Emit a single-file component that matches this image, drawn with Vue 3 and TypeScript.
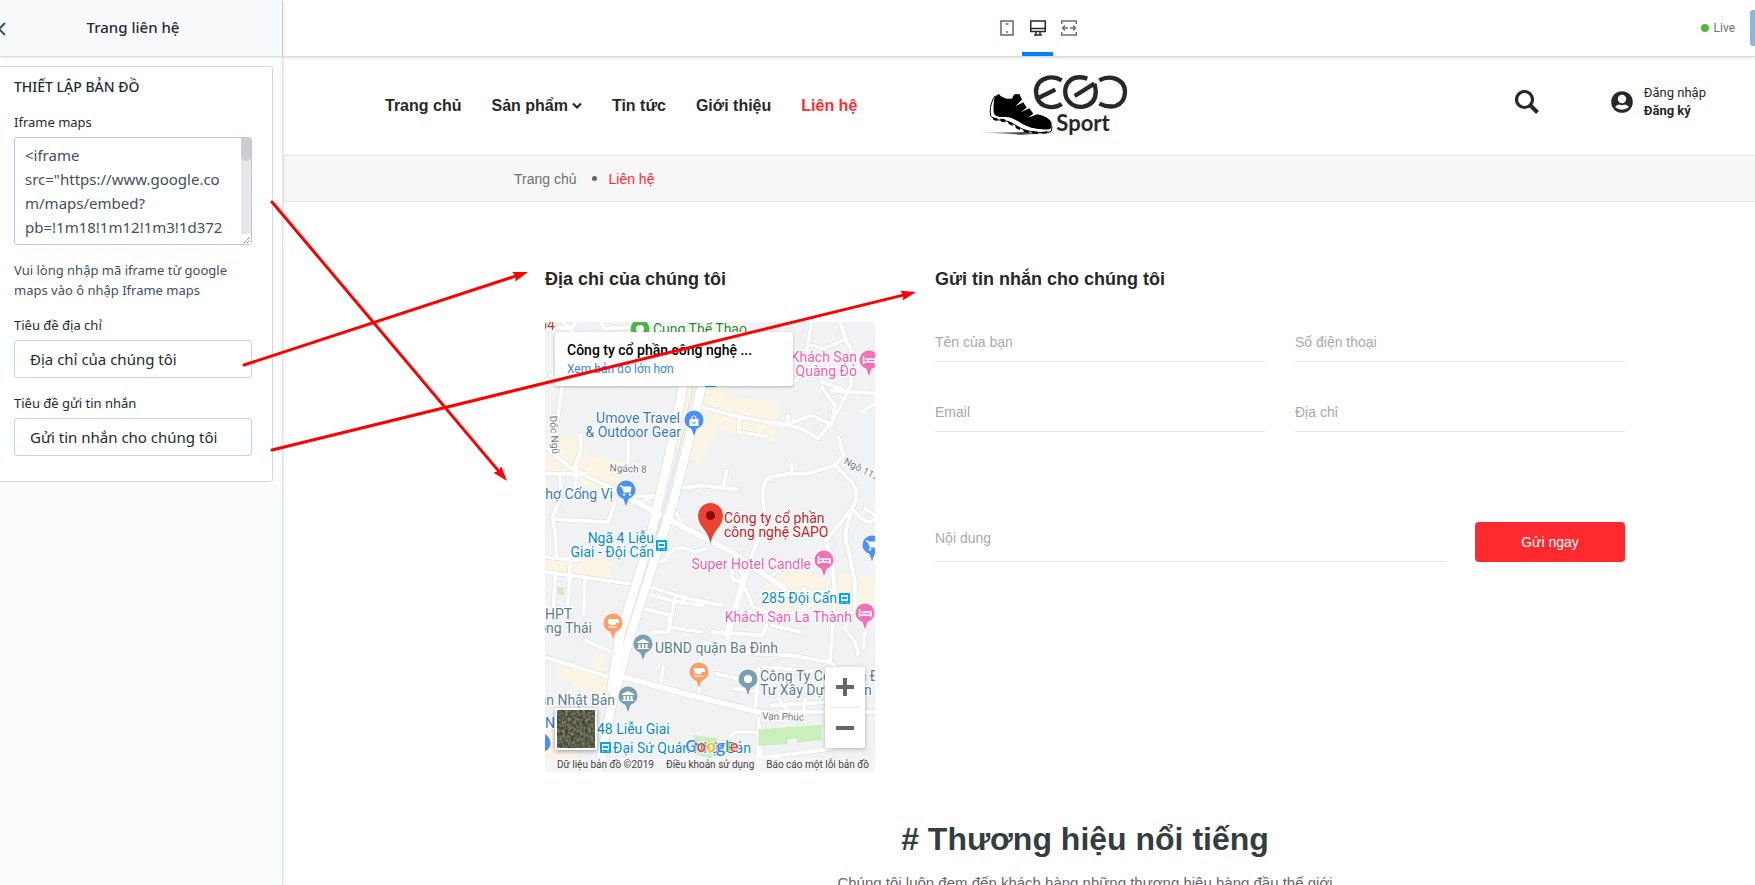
<script setup lang="ts">
interface PinItem { x: number; y: number; fill: string; kind: 'bag' | 'cart' | 'bed' | 'cup' | 'bank' | 'dot' | 'tree' }
interface LabelItem { x: number; y: number; text: string; tone: string; anchor?: 'start' | 'middle' | 'end'; small?: boolean; rotate?: number }
interface Arrow { x: number; y: number; tx: number; ty: number }

const navItems = [
  { text: 'Trang chủ' },
  { text: 'Sản phẩm', more: true },
  { text: 'Tin tức' },
  { text: 'Giới thiệu' },
  { text: 'Liên hệ', active: true },
]

const iframeCode = '<iframe\nsrc="https://www.google.co\nm/maps/embed?\npb=!1m18!1m12!1m3!1d372'

const minorRoads = [
  'M0 10 L70 20 M55 0 L95 40 M165 0 L180 20 L260 15 M90 0 L60 70 M18 160 L52 190 L36 300',
  'M800 0 L785 90 Q770 190 720 190 M885 0 L905 60 Q930 90 920 140 L918 190 L860 300 L820 350 L770 320 L690 300',
  'M905 50 L835 80 L800 70 M890 200 L830 180 M860 205 L990 215 M830 195 L870 250 L860 310',
  'M470 255 L585 285 L720 310 L800 280 L865 310 M730 280 L725 310 M950 270 L990 245',
  'M585 290 L580 330 L665 343',
  'M0 375 L80 440 L200 500 M105 340 L110 380 L90 430 L95 470 M250 340 L250 420 M0 455 L120 455 M95 440 L90 500',
  'M45 455 L50 520 L20 590 L80 595 L190 600 L210 540 M22 590 L30 630 L35 700 M0 705 L100 715 M78 700 L72 780 M0 750 L110 765 L290 790 M30 760 L25 870 M75 765 L65 880 M120 770 L115 880',
  'M250 525 L340 520 M280 545 L340 515 M400 500 L470 490 L575 502 M535 495 L545 448 M380 550 L420 620 M340 720 L360 715 L375 690 Q400 665 450 690 L480 680',
  'M870 430 L785 455 L735 455 L675 465 Q645 490 655 540 L660 580 L645 640 L600 750 L540 940 M740 425 L740 455',
  'M880 345 L895 400 L870 430 L920 480 Q950 520 920 560 L950 590 Q975 610 990 590 M920 560 L840 660 L860 700 L870 820 M920 570 Q890 640 910 680 L930 780 L930 860 M960 560 L990 580',
  'M570 700 L560 760 Q570 790 600 770 L585 745 M840 720 Q750 700 670 770 M720 800 L760 825 L780 800 M870 800 L780 860 L680 890',
  'M270 780 L410 825 L530 850 M420 820 L410 845 M300 860 L375 880 L370 915 L470 930 M305 815 L375 835 L475 850 M390 830 L370 930 L320 930 M610 740 L540 980',
  'M500 930 L650 940 L665 910 M680 910 L765 930 M600 800 L625 855 L660 870 M475 960 L630 995 L740 1000 L850 1020',
  'M120 955 L200 990 M0 1005 L210 1070 M355 1035 L345 1090 M470 990 L460 1130 M515 1055 L620 1080 M570 1100 L640 1110 M640 1040 L630 1180 M655 1035 L850 1050 M700 1130 L740 1180 M780 1130 L775 1190 M680 1150 L860 1140',
  'M645 1170 L990 1170 M540 1260 L570 1230 L640 1230 L640 1350 M640 1310 L860 1280 M640 1190 L650 1320',
  'M870 820 L855 1020 L900 1060 M920 870 L900 920 L930 960 L940 1000 M960 930 L955 980',
]

const pins: PinItem[] = [
  { x: 95, y: 24, fill: '#4bb543', kind: 'tree' },
  { x: 324, y: 55, fill: '#f072b6', kind: 'bed' },
  { x: 149, y: 115, fill: '#4a90f5', kind: 'bag' },
  { x: 81, y: 185, fill: '#4a90f5', kind: 'cart' },
  { x: 279, y: 255, fill: '#f072b6', kind: 'bed' },
  { x: 327, y: 240, fill: '#4a90f5', kind: 'cart' },
  { x: 68, y: 318, fill: '#ff9e67', kind: 'cup' },
  { x: 98, y: 339, fill: '#7b9eb0', kind: 'bank' },
  { x: 320, y: 308, fill: '#f072b6', kind: 'bed' },
  { x: 154, y: 367, fill: '#ff9e67', kind: 'cup' },
  { x: 203, y: 374, fill: '#7b9eb0', kind: 'dot' },
  { x: 83, y: 391, fill: '#7b9eb0', kind: 'bank' },
  { x: -4, y: 438, fill: '#4a90f5', kind: 'dot' },
]

const labels: LabelItem[] = [
  { x: 10, y: 8, text: '04', tone: 'brick', anchor: 'end' },
  { x: 108, y: 12, text: 'Cung Thể Thao', tone: 'green' },
  { x: 312, y: 40, text: 'Khách Sạn', tone: 'pink', anchor: 'end' },
  { x: 312, y: 54, text: 'Quàng Đỏ', tone: 'pink', anchor: 'end' },
  { x: 135, y: 101, text: 'Umove Travel', tone: 'navy', anchor: 'end' },
  { x: 136, y: 115, text: '& Outdoor Gear', tone: 'navy', anchor: 'end' },
  { x: 6, y: 113, text: 'Dốc Ngũ', tone: 'gray', anchor: 'middle', small: true, rotate: 86 },
  { x: 83, y: 150, text: 'Ngách 8', tone: 'gray', anchor: 'middle', small: true, rotate: 2 },
  { x: 315, y: 150, text: 'Ngõ 117', tone: 'gray', anchor: 'middle', small: true, rotate: 27 },
  { x: 68, y: 177, text: 'Chợ Cống Vị', tone: 'navy', anchor: 'end' },
  { x: 179, y: 201, text: 'Công ty cổ phần', tone: 'red' },
  { x: 179, y: 215, text: 'công nghệ SAPO', tone: 'red' },
  { x: 109, y: 221, text: 'Ngã 4 Liễu', tone: 'sky', anchor: 'end' },
  { x: 109, y: 235, text: 'Giai - Đội Cấn', tone: 'sky', anchor: 'end' },
  { x: 266, y: 247, text: 'Super Hotel Candle', tone: 'pink', anchor: 'end' },
  { x: 292, y: 281, text: '285 Đội Cấn', tone: 'sky', anchor: 'end' },
  { x: 307, y: 300, text: 'Khách Sạn La Thành', tone: 'pink', anchor: 'end' },
  { x: 0, y: 297, text: 'HPT', tone: 'slate' },
  { x: 47, y: 311, text: 'Đông Thái', tone: 'slate', anchor: 'end' },
  { x: 110, y: 331, text: 'UBND quận Ba Đình', tone: 'slate' },
  { x: 215, y: 359, text: 'Công Ty Cổ Phần Đ', tone: 'slate' },
  { x: 215, y: 373, text: 'Tư Xây Dựng Niên', tone: 'slate' },
  { x: 70, y: 383, text: 'quán Nhật Bản', tone: 'slate', anchor: 'end' },
  { x: 0, y: 406, text: 'Nội', tone: 'navy' },
  { x: 238, y: 398, text: 'Vạn Phúc', tone: 'gray', anchor: 'middle', small: true, rotate: 2 },
  { x: 52, y: 412, text: '48 Liễu Giai', tone: 'sky' },
  { x: 68, y: 431, text: 'Đại Sứ Quán Nhật Bản', tone: 'sky' },
]

const stops = [[111, 218], [294, 271], [55, 420], [160, 54]]

const googleLetters = [
  { c: 'G', f: '#4285f4' }, { c: 'o', f: '#ea4335' }, { c: 'o', f: '#fbbc05' },
  { c: 'g', f: '#4285f4' }, { c: 'l', f: '#34a853' }, { c: 'e', f: '#ea4335' },
]

const arrows: Arrow[] = [
  { x: 507, y: 481, tx: 272, ty: 202 },
  { x: 528, y: 272, tx: 244, ty: 365 },
  { x: 916, y: 292, tx: 272, ty: 450 },
]
function arrowFrame(a: Arrow): string {
  const deg = Math.atan2(a.y - a.ty, a.x - a.tx) * 180 / Math.PI
  return `translate(${a.x} ${a.y}) rotate(${deg})`
}
function arrowLength(a: Arrow): number {
  return Math.hypot(a.x - a.tx, a.y - a.ty)
}
</script>

<template>
  <div class="editor">
    <aside class="sidebar">
      <header class="side-head">
        <button class="back" type="button" aria-label="Quay lại">
          <svg width="8" height="14" viewBox="0 0 8 14"><path d="M7 1 L1 7 L7 13" fill="none" stroke="#43535f" stroke-width="2" /></svg>
        </button>
        <h1>Trang liên hệ</h1>
      </header>
      <section class="panel">
        <h2>THIẾT LẬP BẢN ĐỒ</h2>
        <label for="iframe">Iframe maps</label>
        <div class="code-wrap">
          <textarea id="iframe" :value="iframeCode"></textarea>
          <span class="track"><span class="thumb"></span>
            <svg class="grip" width="10" height="10" viewBox="0 0 10 10"><path d="M3 9 L9 3 M6 9 L9 6" stroke="#444" stroke-dasharray="1 1" /></svg>
          </span>
        </div>
        <p>Vui lòng nhập mã iframe từ google maps vào ô nhập Iframe maps</p>
        <label for="addr-title">Tiêu đề địa chỉ</label>
        <input id="addr-title" type="text" value="Địa chỉ của chúng tôi" />
        <label for="msg-title">Tiêu đề gửi tin nhắn</label>
        <input id="msg-title" type="text" value="Gửi tin nhắn cho chúng tôi" />
      </section>
    </aside>

    <div class="main">
      <div class="toolbar">
        <div class="devices">
          <button type="button" aria-label="Di động">
            <svg width="16" height="16" viewBox="0 0 16 16" fill="none" stroke="#637381"><rect x="2" y="1" width="12" height="14" stroke-width="1.6" /><path d="M6.500 4 H9.500 M7 12 H9" stroke-width="1.500" /></svg>
          </button>
          <button type="button" class="on" aria-label="Máy tính">
            <svg width="16" height="16" viewBox="0 0 16 16" fill="none" stroke="#212b36" stroke-width="1.500"><rect x="0.750" y="1" width="14.500" height="10.500" /><path d="M1 8.500 H15 M6 12 V14.500 M10 12 V14.500 M4 15 H12" /></svg>
          </button>
          <button type="button" aria-label="Toàn màn hình">
            <svg width="16" height="16" viewBox="0 0 16 16" fill="none" stroke="#637381" stroke-width="1.500"><path d="M0.750 4 V1 H15.250 V4 M0.750 12 V15 H15.250 V12 M1.500 8 H7 M9 8 H14.500 M4 5.500 L1.500 8 L4 10.500 M12 5.500 L14.500 8 L12 10.500" /></svg>
          </button>
        </div>
        <div class="status"><span class="live-dot"></span>Live</div>
        <button class="save" type="button" aria-label="Lưu"></button>
      </div>

      <div class="site">
        <header class="site-head">
          <nav>
            <a v-for="n in navItems" :key="n.text" href="#" :class="{ active: n.active }">{{ n.text }}<svg v-if="n.more" width="10" height="8" viewBox="0 0 10 8"><path d="M1 1.500 L5 5.500 L9 1.500" fill="none" stroke="#282828" stroke-width="2.200" /></svg></a>
          </nav>
          <a class="logo" href="#" aria-label="EGO Sport">
            <svg width="148" height="62" viewBox="0 0 444 186">
              <defs><linearGradient id="shade"><stop offset="0" stop-color="#999" stop-opacity="0.300" /><stop offset="0.500" stop-color="#333" /><stop offset="1" stop-color="#999" stop-opacity="0" /></linearGradient></defs>
              <path d="M0 172 L230 171 L250 174 L120 179 Z" fill="url(#shade)" />
              <path d="M46 62 C34 78 28 100 32 122 C40 134 60 136 80 138 C104 146 122 164 146 168 C170 172 204 176 214 168 L216 154" fill="#fff" stroke="#000" stroke-width="3" />
              <path d="M44 66 L56 56 Q60 64 72 68 Q88 74 97 70 Q98 60 108 56 Q114 60 118 56 L126 74 L106 94 L130 82 L140 98 L122 112 L148 100 L160 116 L144 128 L172 118 Q204 124 214 142 Q218 158 208 163 Q176 164 154 158 C120 150 106 124 72 126 Q46 126 42 116 Q38 92 44 66 Z" />
              <path d="M38 127 l14 3 v8 l-12 -3 z M60 131 l14 1 l3 10 l-13 -2 z M84 138 l14 6 v9 l-12 -6 z M106 150 l14 8 v8 l-13 -7 z M130 163 l16 5 v7 l-15 -4 z M156 169 l18 2 v6 l-17 -1 z M184 171 l18 -2 v6 l-16 1 z" />
              <g fill="none" stroke="#282828" stroke-width="13">
                <path d="M245 16 Q226 4 205 8 Q168 16 168 51 Q170 84 196 93 Q224 102 245 87 M169 72 L226 44" />
                <path d="M322 11 Q290 1 272 15 Q248 35 259 68 Q275 99 310 95 Q346 88 347 53 Q348 42 343 26 M343 26 L284 63" />
                <path d="M358 16 Q380 4 403 10 Q435 20 435 51 Q434 84 406 93 Q382 98 358 86" />
              </g>
              <text x="229" y="169" font-size="66" font-weight="bold" fill="#282828">Sport</text>
            </svg>
          </a>
          <button class="search" type="button" aria-label="Tìm kiếm">
            <svg width="24" height="24" viewBox="0 0 24 24" fill="none" stroke="#282828"><circle cx="9.500" cy="9.500" r="8" stroke-width="3.200" /><path d="M15.500 15.500 L22.500 22.500" stroke-width="4" /></svg>
          </button>
          <div class="account">
            <svg width="22" height="22" viewBox="0 0 22 22"><circle cx="11" cy="11" r="10.800" fill="#282828" /><circle cx="11" cy="8" r="4.200" fill="#fff" /><path d="M4 16 Q6 13.500 8 13.500 Q11 15 14 13.500 Q16 13.500 18 16 Q11 21.500 4 16 Z" fill="#fff" /></svg>
            <div><a href="#">Đăng nhập</a><a href="#" class="strong">Đăng ký</a></div>
          </div>
        </header>

        <div class="crumb-bar">
          <div class="crumbs"><a href="#">Trang chủ</a><i></i><span>Liên hệ</span></div>
        </div>

        <div class="contact">
          <section class="where">
            <h3>Địa chỉ của chúng tôi</h3>
            <div class="map">
              <svg class="canvas" viewBox="0 0 330 450" preserveAspectRatio="xMidYMid slice">
                <rect width="330" height="450" fill="#f1f2f4" />
                <svg width="330" height="450" viewBox="0 0 990 1350">
                  <g fill="#f9f4e3">
                    <path d="M450 0 H590 L575 130 L540 220 L700 245 L695 360 L585 345 L520 320 L465 430 L380 380 L430 200 Z" />
                    <path d="M0 340 H100 L130 400 L240 420 L200 550 L90 470 L0 450 Z M0 690 L200 720 V770 L0 760 Z" />
                    <path d="M650 800 L740 730 L840 770 L900 750 L990 770 V850 H780 L700 880 Z M50 1020 L230 1080 L210 1150 L30 1060 Z M0 1200 L110 1220 L90 1330 L0 1310 Z M150 990 L190 1000 L170 1060 L140 1050 Z" />
                  </g>
                  <g fill="none" stroke-linejoin="round" stroke-linecap="round">
                    <g stroke="#e1e4e8" stroke-width="15"><path v-for="r in minorRoads" :key="r" :d="r" /></g>
                    <g stroke="#fff" stroke-width="11"><path v-for="r in minorRoads" :key="r" :d="r" /></g>
                    <g stroke="#dfe2e6"><path d="M470 190 L440 320 L385 540 L310 770 L250 960 L200 1150 L160 1350 M415 190 L375 390 L310 670 L225 940 L200 1100" stroke-width="31" /><path d="M180 490 L330 570 L560 690 L720 800 M215 1060 L420 1115 L640 1170 L740 1185" stroke-width="21" /></g>
                    <g stroke="#fff"><path d="M470 190 L440 320 L385 540 L310 770 L250 960 L200 1150 L160 1350 M415 190 L375 390 L310 670 L225 940 L200 1100" stroke-width="26" /><path d="M180 490 L330 570 L560 690 L720 800 M215 1060 L420 1115 L640 1170 L740 1185" stroke-width="17" /></g>
                    <path d="M443 200 L408 360 L350 590 L285 800" stroke="#e4e6ea" stroke-width="5" />
                  </g>
                  <g fill="#c9efbb"><path d="M640 1222 L830 1208 V1255 L755 1262 V1250 L728 1252 V1266 L640 1272 Z M450 1240 L520 1250 L500 1310 L430 1290 Z M38 796 h18 v22 h-18 z" /></g>
                </svg>
                <g v-for="(s, i) in stops" :key="i" :transform="`translate(${s[0]} ${s[1]})`">
                  <rect width="11" height="11" rx="1" fill="#00a8f0" /><rect x="2" y="2" width="7" height="6" fill="#fff" /><rect x="3" y="4" width="5" height="2" fill="#00a8f0" />
                  <path d="M3 9 V10 M8 9 V10" stroke="#fff" />
                </g>
                <g v-for="(p, i) in pins" :key="`p${i}`" :transform="`translate(${p.x} ${p.y})`">
                  <path d="M0 -1 L-2.500 -8 Q-9.500 -11 -9.500 -17 A9.500 9.500 0 0 1 9.500 -17 Q9.500 -11 2.500 -8 Z" :fill="p.fill" />
                  <g v-if="p.kind === 'bed'" fill="none" stroke="#fff" stroke-width="1.500"><path d="M-5.500 -21 V-13 M-5.500 -15 H6 V-13 M6 -15 V-18 H-1 V-16" /><circle cx="-3" cy="-18" r="1" fill="#fff" stroke="none" /></g>
                  <g v-else-if="p.kind === 'cart'"><path d="M-6 -21 H-4 L-2 -15 H4 L5 -20 H-4 Z" fill="#fff" stroke="#fff" /><circle cx="-2" cy="-12.500" r="1.200" fill="#fff" /><circle cx="4" cy="-12.500" r="1.200" fill="#fff" /></g>
                  <g v-else-if="p.kind === 'bag'"><path d="M-4.500 -18 H4.500 V-11 H-4.500 Z" fill="#fff" /><path d="M-2 -18 V-20 Q0 -23 2 -20 V-18" fill="none" stroke="#fff" /><path d="M-2 -15 Q0 -12 2 -15" fill="none" stroke="#4a90f5" /></g>
                  <g v-else-if="p.kind === 'cup'" fill="#fff"><path d="M-5 -21 H5 V-20 H6 V-17 H3 L2 -15 H-3 L-5 -17 Z M-5 -13.500 H4 V-12.500 H-5 Z" /></g>
                  <g v-else-if="p.kind === 'bank'" fill="#fff"><path d="M-6 -19 L0 -22 L6 -19 V-18 H-6 Z M-4.500 -17 h2 v4 h-2 z M-1 -17 h2 v4 h-2 z M2.500 -17 h2 v4 h-2 z M-6 -13 H6 V-12 H-6 Z" /></g>
                  <circle v-else cx="0" cy="-17" r="4" fill="#fff" />
                </g>
                <path d="M165.500 222 Q164 213 158 206 Q153 200 153 193.500 A12.500 12.500 0 0 1 178 193.500 Q178 200 173 206 Q167 213 165.500 222 Z" fill="#ea4335" />
                <circle cx="165.500" cy="193.500" r="4.500" fill="#8e0b06" />
                <text v-for="l in labels" :key="l.text" :class="['lbl', l.tone, { small: l.small }]" :text-anchor="l.anchor ?? 'start'" :transform="`translate(${l.x} ${l.y}) rotate(${l.rotate ?? 0})`">{{ l.text }}</text>
                <text x="140" y="430" class="google"><tspan v-for="(g, i) in googleLetters" :key="i" :fill="g.f">{{ g.c }}</tspan></text>
              </svg>
              <div class="place"><strong>Công ty cổ phần công nghệ ...</strong><a href="#">Xem bản đồ lớn hơn</a></div>
              <button class="sat" type="button" aria-label="Vệ tinh">
                <svg viewBox="0 0 38 38"><defs><filter id="ground" color-interpolation-filters="sRGB"><feTurbulence type="fractalNoise" baseFrequency="0.350" numOctaves="3" seed="4" /><feColorMatrix values="0.500 0 0 0 0.120  0.500 0 0 0 0.120  0.450 0 0 0 0.080  0 0 0 0 1" /></filter></defs><rect width="38" height="38" filter="url(#ground)" /></svg>
              </button>
              <div class="zoomer">
                <button type="button" aria-label="Phóng to"><svg width="18" height="18" viewBox="0 0 18 18"><path d="M0 9 H18 M9 0 V18" stroke="#666" stroke-width="4" /></svg></button>
                <button type="button" aria-label="Thu nhỏ"><svg width="18" height="18" viewBox="0 0 18 18"><path d="M0 9 H18" stroke="#666" stroke-width="4" /></svg></button>
              </div>
              <div class="terms"><span>Dữ liệu bản đồ ©2019</span><a href="#">Điều khoản sử dụng</a><a href="#">Báo cáo một lỗi bản đồ</a></div>
            </div>
          </section>

          <section class="message">
            <h3>Gửi tin nhắn cho chúng tôi</h3>
            <form @submit.prevent>
              <input type="text" placeholder="Tên của bạn" aria-label="Tên của bạn" />
              <input type="tel" placeholder="Số điện thoại" aria-label="Số điện thoại" />
              <input type="email" placeholder="Email" aria-label="Email" />
              <input type="text" placeholder="Địa chỉ" aria-label="Địa chỉ" />
              <div class="send-row">
                <textarea placeholder="Nội dung" aria-label="Nội dung"></textarea>
                <button type="submit">Gửi ngay</button>
              </div>
            </form>
          </section>
        </div>

        <section class="brands">
          <h2># Thương hiệu nổi tiếng</h2>
          <p>Chúng tôi luôn đem đến khách hàng những thương hiệu hàng đầu thế giới</p>
        </section>
      </div>
    </div>

    <svg class="notes" aria-hidden="true">
      <g v-for="(a, i) in arrows" :key="i" :transform="arrowFrame(a)">
        <line :x1="-arrowLength(a)" y1="0" x2="-10" y2="0" stroke="#f00" stroke-width="3" stroke-linecap="round" />
        <path d="M0 0 L-15 -5 L-13 0 L-15 5 Z" fill="#f00" />
      </g>
    </svg>
  </div>
</template>

<style>
body { overflow: hidden; }
</style>
<style scoped>
.editor { position: relative; display: flex; height: 100vh; overflow: hidden; background: #fff; font-family: "Liberation Sans", Arial, sans-serif; color: #282828; }
.editor *, .editor *::before { box-sizing: border-box; }
button { border: 0; padding: 0; background: none; font: inherit; }
a { color: inherit; text-decoration: none; }
h1, h2, h3, p { margin: 0; }
svg { display: block; }
input, textarea { border-radius: 0; outline: 0; font: inherit; }

.sidebar { flex: 0 0 283px; background: #fbfcfc; border-right: 1px solid #dfe1e3; box-shadow: 0 0 4px #0002; font-family: "Noto Sans", "Open Sans", sans-serif; color: #212b36; z-index: 1; }
.side-head { position: relative; display: flex; align-items: center; justify-content: center; height: 57px; padding: 0 16px 2px 0; background: #f9fafb; border-bottom: 1px solid #d9dbdf; box-shadow: 0 1px 3px #0001; }
.side-head h1 { font-size: 15px; font-weight: 500; line-height: 20px; }
.back { position: absolute; left: -2px; top: 22px; }
.panel { margin: 9px 9px 0 0; padding: 10px 20px 25px 14px; background: #fff; border: 1px solid #d0d9e3; border-left: 0; border-radius: 0 3px 3px 0; }
.panel h2 { font-size: 14px; font-weight: 500; line-height: 20px; margin-bottom: 15px; }
.panel label { display: block; font-size: 13px; line-height: 20px; margin-bottom: 5px; }
.panel p { font-size: 13px; line-height: 20px; margin: 15px 0; color: #43505c; }
.panel input { display: block; width: 100%; height: 38px; padding: 0 15px; border: 1px solid #c9d3dd; border-radius: 3px; font-size: 15px; color: #212b36; }
.panel input + label { margin-top: 15px; }
.code-wrap { position: relative; }
.code-wrap textarea { display: block; width: 100%; height: 108px; padding: 5px 12px 0 10px; border: 1px solid #b9c8d6; border-radius: 3px; resize: none; overflow: hidden; font-size: 15px; line-height: 24px; color: #43505c; white-space: pre; }
.track { position: absolute; top: 1px; right: 1px; bottom: 1px; width: 10px; background: #e6e7e8; }
.thumb { display: block; height: 23px; border-radius: 0 0 5px 5px; background: #cdcdcd; }
.grip { position: absolute; bottom: 0; right: 0; background: #fff; }

.main { flex: 1; min-width: 0; display: flex; flex-direction: column; }
.toolbar { position: relative; display: flex; flex: 0 0 57px; align-items: center; justify-content: flex-end; border-bottom: 1px solid #dcdcdc; box-shadow: 0 1px 3px #0002; z-index: 1; }
.devices { display: flex; margin-right: auto; padding-left: 708px; height: 56px; }
.devices button { width: 31px; display: flex; align-items: center; justify-content: center; padding-top: 4px; border-bottom: 4px solid transparent; }
.devices .on { border-color: #007fff; }
.status { display: flex; align-items: center; gap: 5px; font: 12px Roboto, sans-serif; color: #637381; }
.live-dot { width: 8px; height: 8px; border-radius: 50%; background: #50b83c; }
.save { width: 5px; height: 36px; margin-left: 15px; border-radius: 3px 0 0 3px; background: #8cb6dc; }

.site-head { display: flex; align-items: center; height: 99px; padding: 0 49px 0 102px; border-bottom: 1px solid #e6e6e6; }
nav { display: flex; gap: 30px; padding-right: 123px; font-size: 16px; font-weight: bold; line-height: 24px; }
nav a { display: flex; align-items: center; gap: 4px; white-space: nowrap; }
nav .active, .crumbs span { color: #ff2a2f; }
.logo text { font-family: Lato, sans-serif; }
.search { margin: 0 0 8px auto; }
.account { display: flex; align-items: center; gap: 11px; margin: 0 0 8px 72px; font: 13px/18px Roboto, sans-serif; }
.account a { display: block; white-space: nowrap; }
.account .strong { font-weight: bold; }
.crumb-bar { padding-left: 130px; background: #f7f7f7; border-bottom: 1px solid #e9e9e9; }
.crumbs { display: flex; align-items: center; max-width: 1140px; margin: 0 auto; height: 45px; font-size: 14px; color: #707070; }
.crumbs i { width: 5px; height: 5px; margin: 0 12px 0 15px; border-radius: 50%; background: #666; }

.contact, .brands { margin-left: 132px; }
.contact { display: grid; grid-template-columns: 330px 690px; justify-content: center; column-gap: 60px; padding-top: 65px; }
.contact h3 { font-size: 18px; line-height: 24px; margin-bottom: 31px; }
.map { position: relative; height: 450px; overflow: hidden; border-radius: 3px; }
.canvas { width: 100%; height: 100%; }
.lbl { font: 14px Roboto, sans-serif; paint-order: stroke; stroke: #fff; stroke-width: 2px; }
.lbl.small { font-size: 10px; }
.brick { fill: #c0392b; } .green { fill: #1f8a2d; } .pink { fill: #ef5fae; } .navy { fill: #3b78c2; }
.gray { fill: #6f7780; } .red { fill: #c5221f; } .sky { fill: #058cc9; } .slate { fill: #5d7d8c; }
.google { font: 600 16px "Open Sans", sans-serif; paint-order: stroke; stroke: #fff; stroke-width: 1px; }
.place { position: absolute; left: 10px; top: 10px; width: 238px; height: 54px; padding: 9px 12px; background: #fff; border-radius: 2px; box-shadow: 0 1px 3px #0004; font: 12px/19px Roboto, sans-serif; }
.place strong { display: block; font-size: 14px; font-weight: 500; color: #000; }
.place a { display: block; color: #3a84df; }
.sat { position: absolute; left: 10px; bottom: 22px; width: 42px; height: 42px; border: 2px solid #fff; border-radius: 2px; box-shadow: 0 1px 4px #0006; }
.zoomer { position: absolute; right: 10px; bottom: 24px; width: 40px; display: grid; background: #fff; border-radius: 2px; box-shadow: 0 1px 4px #0004; padding: 0 5px; }
.zoomer button { display: grid; place-items: center; height: 40px; }
.zoomer button + button { border-top: 1px solid #e6e6e6; height: 41px; }
.terms { position: absolute; right: 0; bottom: 0; left: 0; display: flex; justify-content: space-between; padding: 0 6px 0 12px; background: #f5f5f5cc; font: 10px/14px Roboto, sans-serif; color: #444; white-space: nowrap; }
form { display: grid; grid-template-columns: 1fr 1fr; gap: 30px; }
form input, form textarea { width: 100%; min-width: 0; height: 40px; padding: 0; border: 0; border-bottom: 1px solid #e6e6e6; background: none; font-size: 14px; }
form textarea { flex: 1; display: block; height: 70px; padding-top: 38px; resize: none; overflow: hidden; }
form ::placeholder { color: #a9a9a9; opacity: 1; }
.send-row { grid-column: 1 / -1; display: flex; align-items: flex-end; gap: 30px; padding-top: 30px; }
.send-row button { width: 150px; height: 40px; border-radius: 4px; background: #ff2a2f; color: #fff; font-size: 14px; }
.brands { padding-top: 47px; text-align: center; }
.brands h2 { font-size: 32px; line-height: 40px; color: #333e40; }
.brands p { margin-top: 14px; font-size: 15px; line-height: 20px; color: #666; }
.notes { position: absolute; inset: 0; width: 100%; height: 100%; pointer-events: none; z-index: 5; }
</style>
